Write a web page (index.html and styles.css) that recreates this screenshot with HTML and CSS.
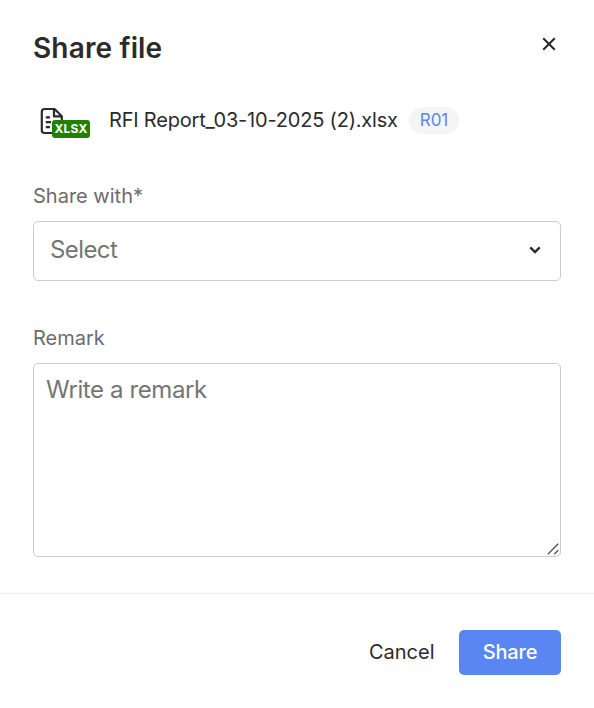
FILE: index.html
```html
<!DOCTYPE html>
<html lang="en">
<head>
<meta charset="utf-8">
<title>Share file</title>
<link rel="stylesheet" href="styles.css">
</head>
<body>
<main class="dialog">
  <header class="header">
    <h1 class="title"><span>Share file</span></h1>
    <button class="close" aria-label="Close"><svg width="14" height="14" viewBox="0 0 14 14"><path d="M1.2 1.2 12.8 12.8M12.8 1.2 1.2 12.8"/></svg></button>
  </header>
  <section class="file">
    <div class="file-icon">
      <svg width="24" height="28" viewBox="0 0 24 28"><path d="M12 26H4.5Q1.8 26 1.8 23.2V4.8Q1.8 2 4.5 2H14.6L21.8 9.2V13M14 2.2V9.4H21.8M5.8 10.4H10M5.8 15.2H11M5.8 20.2H10"/></svg>
      <span class="file-type">XLSX</span>
    </div>
    <span class="file-name">RFI Report_03-10-2025 (2).xlsx</span>
    <span class="badge">R01</span>
  </section>
  <section class="field">
    <div class="label label-share">Share with*</div>
    <div class="select"><span class="select-text">Select</span><svg width="12" height="8" viewBox="0 0 12 8"><path d="M1.3 1.3 6 6 10.7 1.3"/></svg></div>
  </section>
  <section class="field remark">
    <div class="label label-remark">Remark</div>
    <div class="textarea"><span class="placeholder">Write a remark</span><svg class="grip" width="12" height="12" viewBox="0 0 12 12"><path d="M.8 11.2 11.2.8M7.2 11.2 11.2 7.2"/></svg></div>
  </section>
  <footer class="footer">
    <button class="cancel">Cancel</button>
    <button class="share">Share</button>
  </footer>
</main>
</body>
</html>
```
FILE: styles.css
```css
* { box-sizing: border-box; }
body { margin: 0; background: #fff; color: #2b2b2b; font-family: Inter, "Liberation Sans", sans-serif; }
button { border: 0; padding: 0; background: none; color: inherit; font: inherit; }
svg { display: block; fill: none; stroke: #2b2b2b; }
.dialog { height: 708px; display: flex; flex-direction: column; overflow: hidden; }
.header { display: flex; justify-content: space-between; padding: 30px 38px 0 33px; height: 105px; }
.title { margin: 0; font-size: 28px; font-weight: 600; line-height: 36px; letter-spacing: .15px; }
.close { height: 14px; margin-top: 7px; }
.close svg { stroke-width: 2.1; }
.file { display: flex; align-items: center; height: 30px; padding-left: 40px; }
.file-icon { position: relative; width: 50px; height: 30px; margin: 4px 19px 0 0; }
.file-icon svg { stroke-width: 2.2; stroke-linejoin: round; }
.file-type { position: absolute; left: 12px; top: 13px; width: 38px; height: 18px; border-radius: 3px; background: #218000; color: #fff; font-size: 12px; font-weight: 700; line-height: 18px; text-align: center; letter-spacing: .2px; }
.file-name { width: 300px; font-size: 20px; line-height: 30px; white-space: nowrap; letter-spacing: -.2px; }
.badge { width: 50px; height: 27px; border-radius: 14px; background: #f5f5f5; color: #5986f2; font-size: 17px; line-height: 27px; text-align: center; }
.field { padding: 47px 33px 0; }
.label { height: 39px; font-size: 20px; line-height: 28px; color: #6c6c6c; }
.select { height: 60px; border: 1px solid #ccc; border-radius: 5px; display: flex; align-items: center; justify-content: space-between; padding: 0 19px 3px 16px; color: #757575; font-size: 24px; letter-spacing: -.6px; }
.select svg { stroke-width: 2.4; margin-top: 1px; }
.remark { padding-top: 43px; }
.textarea { position: relative; height: 194px; border: 1px solid #ccc; border-radius: 5px; padding: 10px 12px; color: #757575; font-size: 24px; line-height: 32px; letter-spacing: -.4px; }
.grip { position: absolute; right: 1px; bottom: 1px; stroke: #555; stroke-width: 1.4; }
.footer { display: flex; justify-content: flex-end; align-items: flex-start; margin-top: 36px; padding: 36px 33px 0; border-top: 1px solid #ebebeb; }
.cancel { font-size: 20px; line-height: 44px; margin-right: 24.5px; }
.share { width: 102px; height: 45px; border-radius: 5px; background: #5986f2; color: #fff; font-size: 20px; font-weight: 500; line-height: 44px; padding-bottom: 1px; letter-spacing: -.2px; }
```
